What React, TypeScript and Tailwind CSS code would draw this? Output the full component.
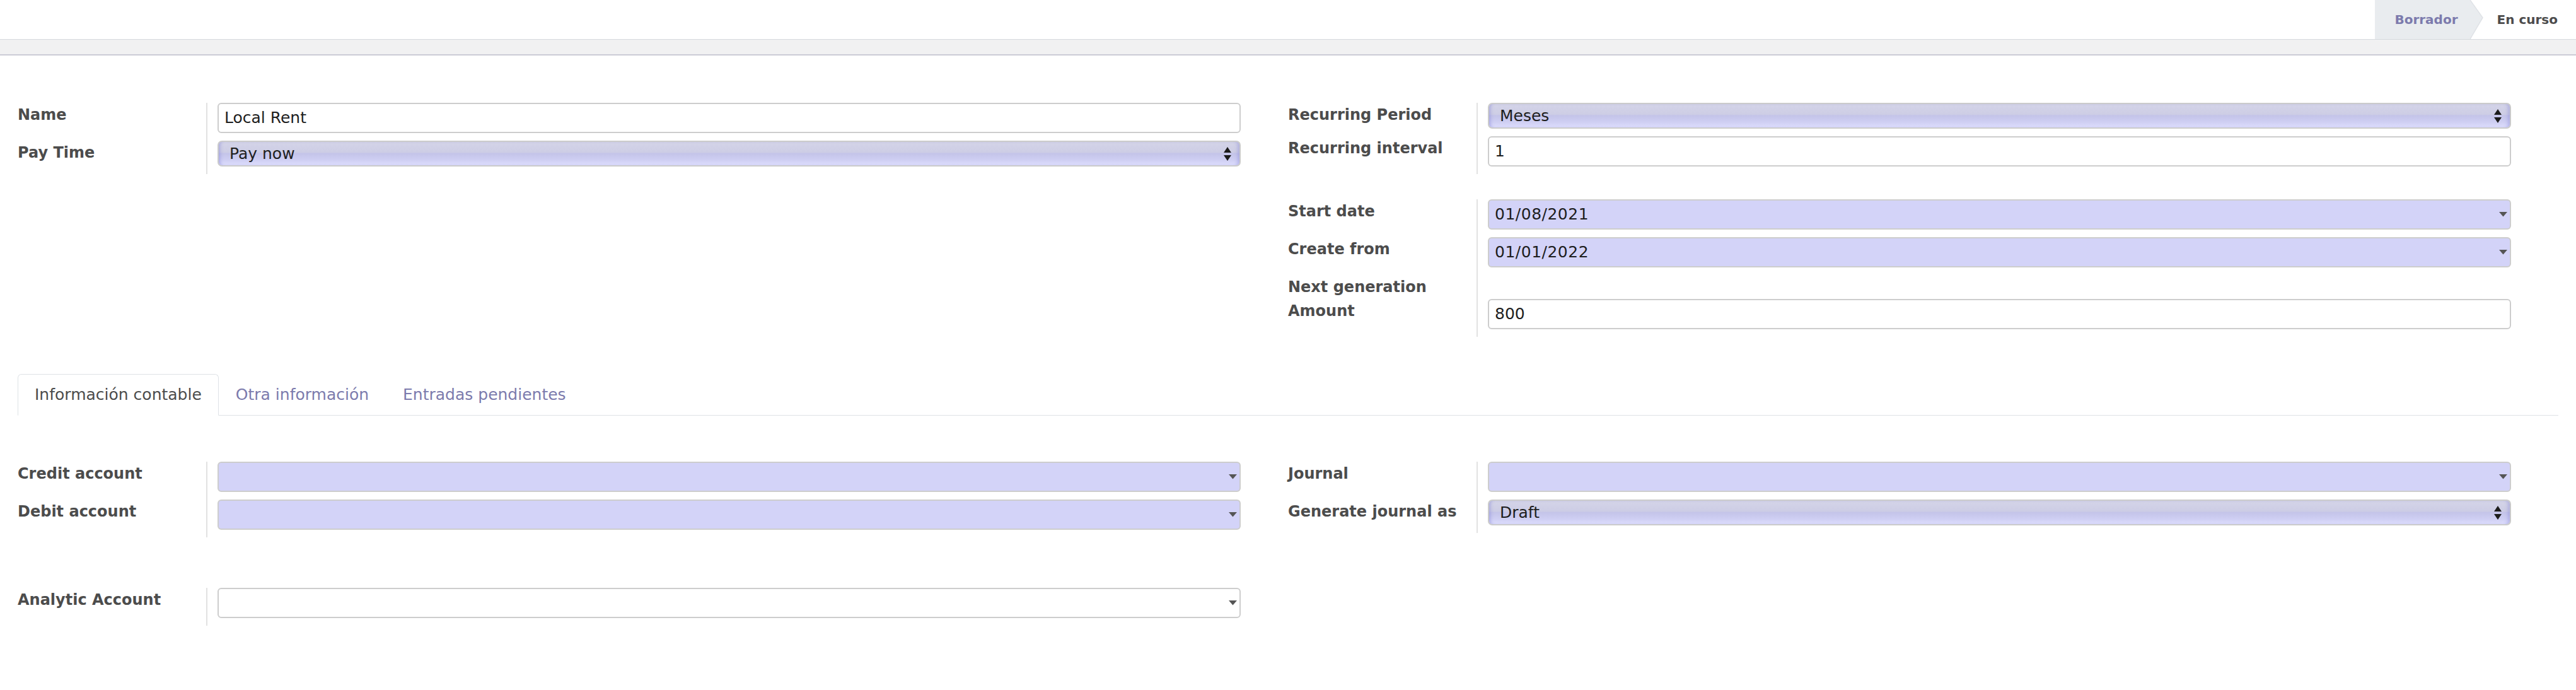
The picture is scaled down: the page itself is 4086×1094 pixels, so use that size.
import React from "react";

const FONT = "font-['DejaVu_Sans','Liberation_Sans',sans-serif]";

function Caret() {
  return (
    <svg width="13" height="8" viewBox="0 0 13 8" className="shrink-0">
      <polygon points="0,0 13,0 6.5,7.5" fill="#555555" />
    </svg>
  );
}

function UpDown() {
  return (
    <svg width="12" height="22" viewBox="0 0 12 22" className="shrink-0">
      <polygon points="6,0 12,9 0,9" fill="#1c1c1c" />
      <polygon points="0,13 12,13 6,22" fill="#1c1c1c" />
    </svg>
  );
}

function TextInput({ value, required }: { value?: string; required?: boolean }) {
  return (
    <div
      className={`h-[48px] rounded-[6px] border-2 border-[#cdcdcd] px-[9px] flex items-center text-[25px] text-[#1e1e1e] ${
        required ? "bg-[#d3d3f8]" : "bg-white"
      }`}
    >
      {value}
    </div>
  );
}

function Many2One({ value, required }: { value?: string; required?: boolean }) {
  return (
    <div
      className={`h-[48px] rounded-[6px] border-2 border-[#cdcdcd] pl-[9px] pr-[4px] flex items-center text-[25px] text-[#1e1e1e] ${
        required ? "bg-[#d3d3f8]" : "bg-white"
      }`}
    >
      <span className="flex-1 tracking-[0.5px]">{value}</span>
      <Caret />
    </div>
  );
}

function Select({ value }: { value: string }) {
  return (
    <div className="h-[41px] rounded-[7px] border-2 border-[#cbcbcb] pl-[17px] pr-[13px] flex items-center text-[25px] text-[#1e1e1e] bg-[linear-gradient(to_bottom,#d4d4e8_0%,#cdcde5_44%,#c4c4e9_50%,#cfcff3_78%,#dedefd_100%)] shadow-[inset_5px_0_5px_-3px_rgba(120,120,210,0.45),inset_-6px_0_5px_-3px_rgba(120,120,210,0.35)]">
      <span className="flex-1">{value}</span>
      <UpDown />
    </div>
  );
}

function Row({ label, children }: { label: string; children?: React.ReactNode }) {
  return (
    <div className="flex">
      <div className="w-[299px] shrink-0 font-bold text-[24px] leading-[38px] text-[#4c4c4c]">{label}</div>
      <div className="flex-1 border-l-2 border-[#e2e2e2] pl-[16px] pb-[12px]">{children}</div>
    </div>
  );
}

export default function App() {
  return (
    <div className={`${FONT} bg-white w-[4086px] h-[1094px] overflow-hidden`}>
      {/* status bar */}
      <div className="h-[63px] flex justify-end border-b border-[#d6d9dd]">
        <div className="flex h-[62px]">
          <div className="bg-[#e9ecef] pl-[31px] pr-[19px] flex items-center font-bold text-[20px] text-[#7c7bad]">
            Borrador
          </div>
          <svg width="21" height="62" viewBox="0 0 21 62" className="shrink-0">
            <polygon points="0,0 20,28 0,62" fill="#e9ecef" />
            <polyline points="0,0 20,28 0,62" fill="none" stroke="#dfe2e6" strokeWidth="1.5" />
          </svg>
          <div className="pl-[22px] pr-[29px] flex items-center font-bold text-[20px] text-[#4c4c4c]">En curso</div>
        </div>
      </div>
      <div className="h-[25px] bg-[#f1f1f2] border-b-2 border-[#cbcbd6]" />

      {/* sheet */}
      <div className="px-[28px] pt-[75px]">
        <div className="grid grid-cols-2">
          <div className="pr-[75px]">
            <Row label="Name">
              <TextInput value="Local Rent" />
            </Row>
            <Row label="Pay Time">
              <Select value="Pay now" />
            </Row>
          </div>
          <div className="pr-[75px]">
            <Row label="Recurring Period">
              <Select value="Meses" />
            </Row>
            <Row label="Recurring interval">
              <TextInput value="1" />
            </Row>
            <div className="mt-[40px]">
              <Row label="Start date">
                <Many2One value="01/08/2021" required />
              </Row>
              <Row label="Create from">
                <Many2One value="01/01/2022" required />
              </Row>
              <Row label="Next generation" />
              <Row label="Amount">
                <TextInput value="800" />
              </Row>
            </div>
          </div>
        </div>

        {/* tabs */}
        <div className="mt-[59px] flex border-b border-[#dee2e6] text-[25px]">
          <div className="h-[66px] -mb-px px-[26px] flex items-center border border-[#dee2e6] border-b-white bg-white rounded-t-[6px] text-[#4c4c4c]">
            Información contable
          </div>
          <div className="h-[66px] -mb-px px-[26px] flex items-center border border-transparent text-[#7c7bad]">
            Otra información
          </div>
          <div className="h-[66px] -mb-px px-[26px] flex items-center border border-transparent text-[#7c7bad]">
            Entradas pendientes
          </div>
        </div>

        <div className="pt-[73px]">
          <div className="grid grid-cols-2">
            <div className="pr-[75px]">
              <Row label="Credit account">
                <Many2One required />
              </Row>
              <Row label="Debit account">
                <Many2One required />
              </Row>
            </div>
            <div className="pr-[75px]">
              <Row label="Journal">
                <Many2One required />
              </Row>
              <Row label="Generate journal as">
                <Select value="Draft" />
              </Row>
            </div>
          </div>
          <div className="mt-[80px] grid grid-cols-2">
            <div className="pr-[75px]">
              <Row label="Analytic Account">
                <Many2One />
              </Row>
            </div>
          </div>
        </div>
      </div>
    </div>
  );
}
